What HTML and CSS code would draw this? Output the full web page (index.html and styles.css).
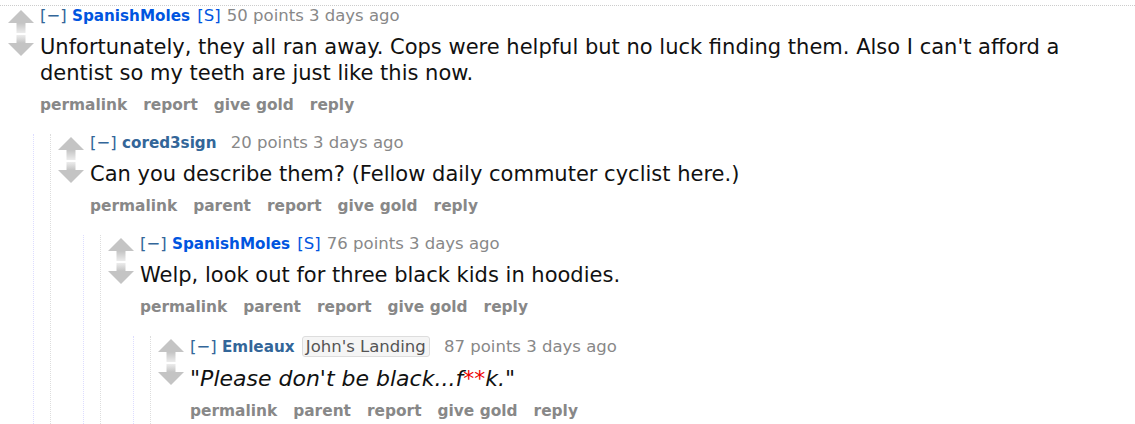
FILE: index.html
```html
<!DOCTYPE html>
<html lang="en">
<head>
  <meta charset="UTF-8" />
  <title>comments</title>
  <link rel="stylesheet" href="styles.css">
</head>
<body>
  <div class="comment top">
    <div class="entry">
      <div class="midcol">
        <svg class="arrows" width="26" height="46" viewBox="0 0 26 46">
          <defs>
            <linearGradient id="fadeUp" x1="0" y1="0" x2="0" y2="1">
              <stop offset="0" stop-color="#c4c4c4" />
              <stop offset="1" stop-color="#ececec" />
            </linearGradient>
            <linearGradient id="fadeDown" x1="0" y1="0" x2="0" y2="1">
              <stop offset="0" stop-color="#ececec" />
              <stop offset="1" stop-color="#c4c4c4" />
            </linearGradient>
          </defs>
          <polygon points="13,0 0,13 26,13" fill="#c4c4c4" />
          <rect x="8.5" y="13" width="9" height="10" fill="url(#fadeUp)" />
          <rect x="8.5" y="25" width="9" height="8" fill="url(#fadeDown)" />
          <polygon points="0,33 26,33 13,46" fill="#c4c4c4" />
        </svg>
      </div>
      <div class="content">
        <p class="tagline"><span class="expand">[&minus;]</span> <span class="author submitter">SpanishMoles</span> <span class="submitter-tag">[S]</span> <span class="score">50 points</span> <span class="time">3 days ago</span></p>
        <div class="md"><p>Unfortunately, they all ran away. Cops were helpful but no luck finding them. Also I can't afford a dentist so my teeth are just like this now.</p></div>
        <ul class="buttons">
          <li>permalink</li>
          <li>report</li>
          <li>give gold</li>
          <li>reply</li>
        </ul>
      </div>
    </div>

    <div class="child">
      <div class="comment">
        <div class="entry">
          <div class="midcol">
            <svg class="arrows" width="26" height="46" viewBox="0 0 26 46">
              <polygon points="13,0 0,13 26,13" fill="#c4c4c4" />
              <rect x="8.5" y="13" width="9" height="10" fill="url(#fadeUp)" />
              <rect x="8.5" y="25" width="9" height="8" fill="url(#fadeDown)" />
              <polygon points="0,33 26,33 13,46" fill="#c4c4c4" />
            </svg>
          </div>
          <div class="content">
            <p class="tagline"><span class="expand">[&minus;]</span> <span class="author">cored3sign</span> <span class="score gap">20 points</span> <span class="time">3 days ago</span></p>
            <div class="md"><p>Can you describe them? (Fellow daily commuter cyclist here.)</p></div>
            <ul class="buttons">
              <li>permalink</li>
              <li>parent</li>
              <li>report</li>
              <li>give gold</li>
              <li>reply</li>
            </ul>
          </div>
        </div>

        <div class="child">
          <div class="comment">
            <div class="entry">
              <div class="midcol">
                <svg class="arrows" width="26" height="46" viewBox="0 0 26 46">
                  <polygon points="13,0 0,13 26,13" fill="#c4c4c4" />
                  <rect x="8.5" y="13" width="9" height="10" fill="url(#fadeUp)" />
                  <rect x="8.5" y="25" width="9" height="8" fill="url(#fadeDown)" />
                  <polygon points="0,33 26,33 13,46" fill="#c4c4c4" />
                </svg>
              </div>
              <div class="content">
                <p class="tagline"><span class="expand">[&minus;]</span> <span class="author submitter">SpanishMoles</span> <span class="submitter-tag">[S]</span> <span class="score">76 points</span> <span class="time">3 days ago</span></p>
                <div class="md"><p>Welp, look out for three black kids in hoodies.</p></div>
                <ul class="buttons">
                  <li>permalink</li>
                  <li>parent</li>
                  <li>report</li>
                  <li>give gold</li>
                  <li>reply</li>
                </ul>
              </div>
            </div>

            <div class="child">
              <div class="comment last">
                <div class="entry">
                  <div class="midcol">
                    <svg class="arrows" width="26" height="46" viewBox="0 0 26 46">
                      <polygon points="13,0 0,13 26,13" fill="#c4c4c4" />
                      <rect x="8.5" y="13" width="9" height="10" fill="url(#fadeUp)" />
                      <rect x="8.5" y="25" width="9" height="8" fill="url(#fadeDown)" />
                      <polygon points="0,33 26,33 13,46" fill="#c4c4c4" />
                    </svg>
                  </div>
                  <div class="content">
                    <p class="tagline"><span class="expand">[&minus;]</span> <span class="author">Emleaux</span> <span class="flair">John's Landing</span> <span class="score gap">87 points</span> <span class="time">3 days ago</span></p>
                    <div class="md"><p><em>"Please don't be black...f<span class="censor">**</span>k."</em></p></div>
                    <ul class="buttons">
                      <li>permalink</li>
                      <li>parent</li>
                      <li>report</li>
                      <li>give gold</li>
                      <li>reply</li>
                    </ul>
                  </div>
                </div>
              </div>
            </div>
          </div>
        </div>
      </div>
    </div>
  </div>
</body>
</html>
```

FILE: styles.css
```css
html, body {
  margin: 0;
  padding: 0;
  background: #fff;
  overflow: hidden;
}

body {
  font-family: "DejaVu Sans", Verdana, sans-serif;
  color: #222;
  height: 424px;
}

.comment {
  border-left: 1px dotted #ddd;
  padding-left: 7px;
}

.comment.top {
  margin-top: 5px;
  border-top: 1px dotted #ccc;
  border-left: none;
  padding-left: 8px;
  padding-top: 1px;
}

.comment.last {
  padding-bottom: 40px;
}

.entry {
  display: flex;
}

.midcol {
  width: 26px;
  flex: none;
  padding-top: 3px;
  margin-right: 6px;
}

.arrows {
  display: block;
}

.content {
  flex: 1;
}

.tagline {
  margin: 0;
  font-size: 16.5px;
  line-height: 18px;
  color: #888;
  white-space: nowrap;
}

.expand {
  color: #369;
}

.author {
  font-size: 15.2px;
  font-weight: bold;
  color: #369;
}

.author.submitter {
  color: #0055df;
}

.submitter-tag {
  color: #0055df;
  margin-left: 2px;
  margin-right: 1px;
}

.gap {
  margin-left: 9px;
}

.flair {
  display: inline-block;
  font-size: 16.5px;
  line-height: 19px;
  color: #545454;
  background: #f5f5f5;
  border: 1px solid #ddd;
  border-radius: 3px;
  padding: 0 3px;
  margin-left: 2px;
}

.md {
  margin: 9px 0 10px;
}

.md p {
  margin: 0;
  font-size: 21px;
  line-height: 26px;
  color: #111;
}

.md em {
  font-size: 22px;
}

.censor {
  color: #e00;
}

.buttons {
  list-style: none;
  margin: 0;
  padding: 0;
  display: flex;
  gap: 16px;
  font-size: 15.4px;
  line-height: 18px;
  font-weight: bold;
  color: #888;
}

.child {
  margin-left: 25px;
  margin-top: 20px;
  border-left: 1px dotted #ddf;
}

.child > .comment {
  margin-left: 16px;
}
```
